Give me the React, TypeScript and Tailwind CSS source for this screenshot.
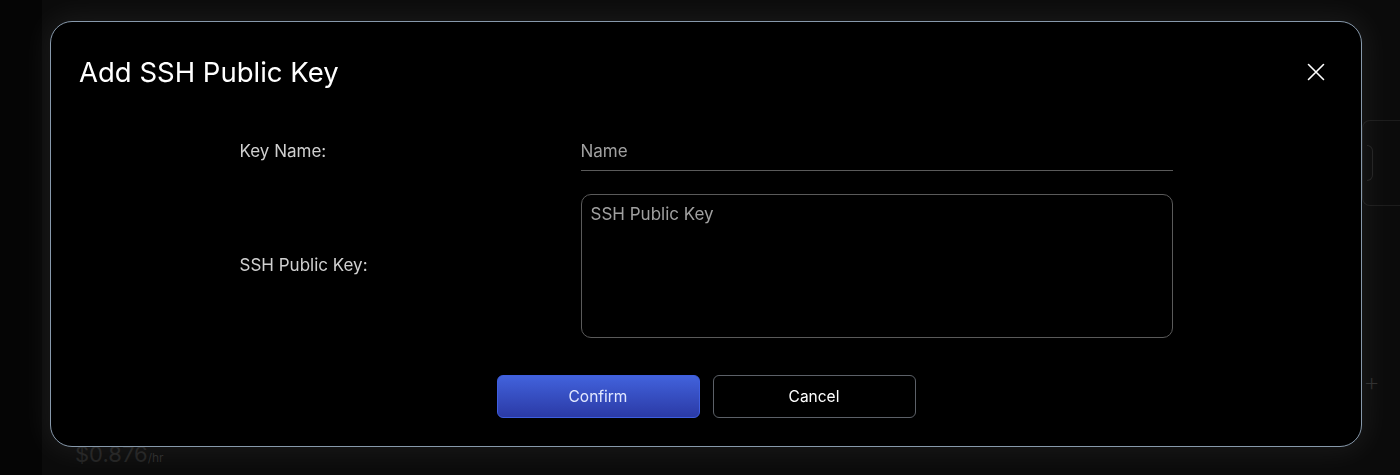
import { useState } from 'react';

function CloseIcon() {
  return (
    <svg width="18" height="18" viewBox="0 0 18 18" fill="none" stroke="currentColor" strokeWidth="1.6" strokeLinecap="round">
      <path d="M1.5 1.5 L16.5 16.5 M16.5 1.5 L1.5 16.5" />
    </svg>
  );
}

export default function App() {
  const [name, setName] = useState('');
  const [sshKey, setSshKey] = useState('');

  return (
    <div className="relative h-[475px] w-[1400px] overflow-hidden bg-[#050505]" style={{ fontFamily: 'Inter, "Noto Sans", sans-serif' }}>
      {/* Page behind the dialog */}
      <div className="flex h-full">
        <div className="w-[42px] shrink-0 bg-[#050505]"></div>
        <div className="flex flex-1 flex-col bg-[#0b0b0b]">
          <div className="flex flex-1 justify-end pt-[120px]">
            <div className="h-[86px] w-[38px] rounded-l-lg border border-r-0 border-[#1c1c1c] py-[24px] pl-[4px]">
              <div className="h-[36px] w-[6px] rounded-r-md border border-l-0 border-[#222]"></div>
            </div>
          </div>
          <div className="flex items-end justify-between pr-[20px]">
            <p className="pb-[10px] pl-[33px] text-[22px] leading-none text-[#222]">
              $0.876<span className="text-[12px] text-[#2a2a2a]">/hr</span>
            </p>
            <span className="mb-[80px] text-[26px] font-extralight leading-none text-[#2e2e2e]">+</span>
          </div>
        </div>
      </div>

      {/* Dialog overlay */}
      <div className="fixed inset-0 flex items-start justify-center pl-[12px] pt-[21px]">
        <div className="w-[1312px] rounded-[22px] border-[1.5px] border-[#8799ab] bg-black pb-[28px] shadow-[0_0_28px_6px_rgba(255,255,255,0.06)]">
          <div className="flex items-center justify-between pl-[28px] pr-[36px] pt-[33px]">
            <h2 className="text-[27.5px] font-normal leading-[34px] text-white">Add SSH Public Key</h2>
            <button className="text-white">
              <CloseIcon />
            </button>
          </div>

          <div className="mx-auto mt-[43px] grid w-[933px] grid-cols-[341px_592px] items-center gap-y-[23px]">
            <label className="text-[17px] text-[#d0d0d0]">Key Name:</label>
            <input
              value={name}
              onChange={(e) => setName(e.target.value)}
              placeholder="Name"
              className="h-[39px] border-b border-[#5a5a5a] bg-transparent text-[17px] text-white outline-none placeholder:text-[#a0a0a0]"
            />

            <label className="text-[17px] text-[#d0d0d0]">SSH Public Key:</label>
            <textarea
              value={sshKey}
              onChange={(e) => setSshKey(e.target.value)}
              placeholder="SSH Public Key"
              className="h-[144px] resize-none rounded-[10px] border border-[#5a5a5a] bg-transparent px-[9px] py-[8px] text-[17px] leading-[22px] text-white outline-none placeholder:text-[#a0a0a0]"
            />
          </div>

          <div className="mt-[37px] flex justify-center gap-[13px]">
            <button className="h-[43px] w-[203px] rounded-[6px] border border-[#3e5ee0] bg-gradient-to-b from-[#4262dc] to-[#2b3aa6] text-[15.5px] text-[#e2e8ff]">
              Confirm
            </button>
            <button className="h-[43px] w-[203px] rounded-[6px] border border-[#5c6168] bg-black text-[15.5px] text-white">
              Cancel
            </button>
          </div>
        </div>
      </div>
    </div>
  );
}
